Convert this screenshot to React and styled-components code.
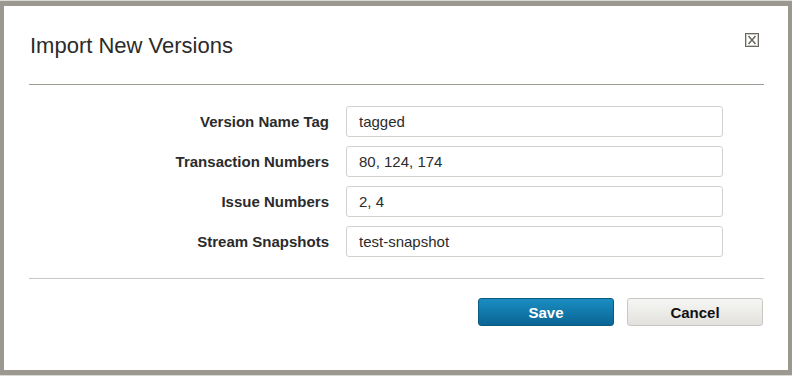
import React from "react";
import styled, { createGlobalStyle } from "styled-components";

const Global = createGlobalStyle`
  html, body { margin: 0; padding: 0; background: #ffffff; }
  body { font-family: "Liberation Sans", Arial, sans-serif; }
  * { box-sizing: border-box; }
`;

const Frame = styled.div`
  width: 792px;
  height: 376px;
  border-top: 1px solid #dcdad6;
  border-bottom: 1px solid #dcdad6;
`;

const Dialog = styled.div`
  height: 374px;
  background: #ffffff;
  border-style: solid;
  border-color: #9b9890;
  border-width: 5px 4px 5px 4px;
  padding: 0 24px 0 25px;
  display: flex;
  flex-direction: column;
`;

const Header = styled.div`
  height: 79px;
  display: flex;
  align-items: flex-start;
  justify-content: space-between;
  border-bottom: 1px solid #a09d97;
  padding: 27px 5px 0 1px;
`;

const Title = styled.h1`
  margin: 0;
  font-size: 22px;
  font-weight: normal;
  color: #2b2b2b;
  line-height: 26px;
`;

const CloseButton = styled.button`
  border: none;
  background: none;
  padding: 0;
  width: 14px;
  height: 14px;
  cursor: pointer;
  display: flex;
`;

const Form = styled.div`
  display: grid;
  grid-template-columns: 300px 377px;
  column-gap: 17px;
  row-gap: 9px;
  align-items: center;
  padding-top: 21px;
  padding-bottom: 21px;
  border-bottom: 1px solid #c9c7c2;
`;

const Label = styled.label`
  text-align: right;
  font-size: 15px;
  font-weight: bold;
  color: #2b2b2b;
`;

const Input = styled.input`
  height: 31px;
  width: 100%;
  border: 1px solid #d3d1cc;
  border-radius: 3px;
  padding: 0 12px;
  font-family: "Liberation Sans", Arial, sans-serif;
  font-size: 15px;
  color: #2b2b2b;
  background: #fff;
  outline: none;
`;

const Footer = styled.div`
  display: flex;
  justify-content: flex-end;
  gap: 13px;
  padding-top: 19px;
  padding-right: 1px;
`;

const Button = styled.button`
  width: 136px;
  height: 28px;
  border-radius: 3px;
  font-family: "Liberation Sans", Arial, sans-serif;
  font-size: 15px;
  font-weight: bold;
  cursor: pointer;
  border: 1px solid ${(p) => (p.$primary ? "#0a5a82" : "#c9c7c1")};
  color: ${(p) => (p.$primary ? "#ffffff" : "#111111")};
  background: ${(p) =>
    p.$primary
      ? "linear-gradient(#1a8dc2, #0a6594)"
      : "linear-gradient(#f6f6f4, #e2e1dd)"};
`;

const fields = [
  ["Version Name Tag", "tagged"],
  ["Transaction Numbers", "80, 124, 174"],
  ["Issue Numbers", "2, 4"],
  ["Stream Snapshots", "test-snapshot"],
];

function CloseIcon() {
  return (
    <svg width="14" height="14" viewBox="0 0 14 14">
      <rect x="0.5" y="0.5" width="13" height="13" fill="#fff" stroke="#6a675f" />
      <rect x="1.5" y="1.5" width="11" height="11" fill="none" stroke="#d0cec8" />
      <path d="M3.5 3 L10.5 11 M10.5 3 L3.5 11" stroke="#6a675f" strokeWidth="1.5" />
    </svg>
  );
}

export default function App() {
  return (
    <>
      <Global />
      <Frame>
        <Dialog>
          <Header>
            <Title>Import New Versions</Title>
            <CloseButton aria-label="Close">
              <CloseIcon />
            </CloseButton>
          </Header>
          <Form>
            {fields.map(([label, value]) => (
              <React.Fragment key={label}>
                <Label>{label}</Label>
                <Input defaultValue={value} />
              </React.Fragment>
            ))}
          </Form>
          <Footer>
            <Button $primary>Save</Button>
            <Button>Cancel</Button>
          </Footer>
        </Dialog>
      </Frame>
    </>
  );
}
